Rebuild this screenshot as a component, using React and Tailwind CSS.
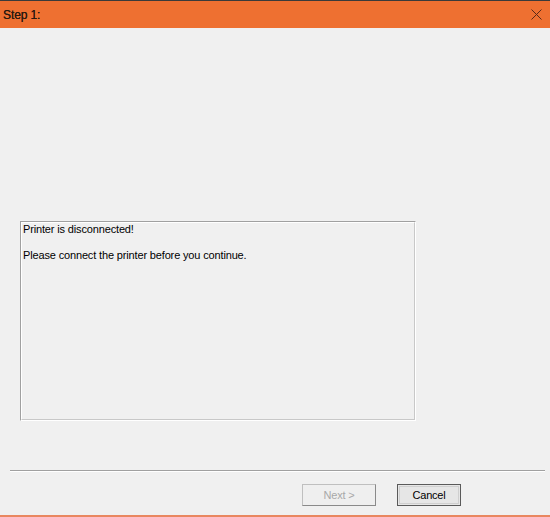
import React from "react";

// Wizard dialog: orange caption bar, status box, separator and nav buttons
const App = () => {
  return (
    <div
      className="w-[550px] h-[517px] flex flex-col bg-[#f0f0f0] overflow-hidden"
      style={{ fontFamily: '"Liberation Sans", Arial, sans-serif' }}
    >
      {/* caption */}
      <div className="h-[1px] bg-[#3a3a3a]" />
      <div className="h-[27px] bg-[#ee7031] flex items-center justify-between pl-[3px] pr-[8px]">
        <span className="text-[12px] text-[#2a1a10] tracking-[-0.1px] [text-shadow:0_0_0.4px_#2a1a10]">Step 1:</span>
        <svg width="11" height="11" viewBox="0 0 11 11" className="text-[#5a2a18]">
          <path d="M0.5 0.5 L10.5 10.5 M10.5 0.5 L0.5 10.5" stroke="currentColor" strokeWidth="1" />
        </svg>
      </div>

      {/* body */}
      <div className="flex-1 flex flex-col">
        <div className="h-[193px]" />
        <div className="ml-[20px] w-[396px] h-[200px] border-t border-l border-t-[#a0a0a0] border-l-[#a0a0a0] border-r border-b border-r-white border-b-white">
          <div className="h-full border-t border-l border-t-white border-l-white border-r border-b border-r-[#c8c8c8] border-b-[#c8c8c8] px-[1px] text-[11px] leading-[13px] text-black tracking-[-0.15px]">
            <p>Printer is disconnected!</p>
            <p className="mt-[13px]">Please connect the printer before you continue.</p>
          </div>
        </div>

        {/* separator */}
        <div className="mt-[49px] ml-[10px] mr-[5px] h-[2px] border-t border-t-[#a0a0a0] border-b border-b-white" />

        {/* buttons */}
        <div className="mt-[12px] flex pl-[302px] gap-[21px]">
          <button className="w-[74px] h-[22px] bg-[#efefef] border border-[#bfbfbf] border-r-[#8a8a8a] border-b-[#8a8a8a] text-[11px] text-[#a8a8a8] tracking-[-0.2px]">
            Next &gt;
          </button>
          <button className="w-[64px] h-[22px] bg-[#e6e6e6] border border-[#5a5a5a] text-[11px] text-black tracking-[-0.2px] outline outline-1 outline-offset-[-3px] outline-[#cfcfcf]">
            Cancel
          </button>
        </div>
      </div>
      <div className="h-[2px] bg-[#e98760]" />
    </div>
  );
};

export default App;
